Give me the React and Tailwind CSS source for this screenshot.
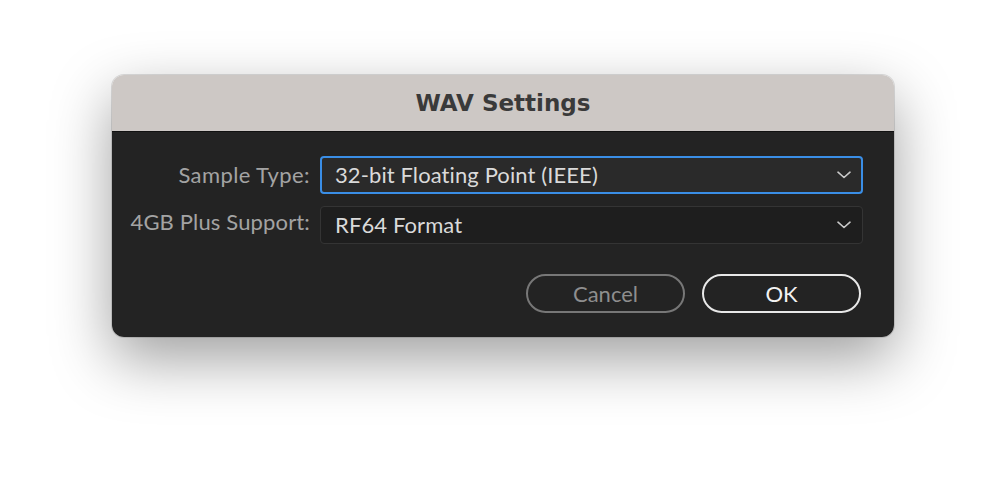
const Chevron = () => (
    <svg width="14" height="8" viewBox="0 0 14 8" fill="none" className="shrink-0">
        <path d="M1 1.2 L7 6.5 L13 1.2" stroke="#c9c9c9" strokeWidth="1.6" strokeLinecap="round" strokeLinejoin="round" />
    </svg>
);

function Select({ value, focused }) {
    return (
        <div
            className={
                focused
                    ? 'h-[38px] flex items-center justify-between pl-[13px] pr-[10px] rounded-[4px] border-2 border-[#3a8ee6] bg-[#2a2a2a]'
                    : 'h-[38px] flex items-center justify-between pl-[14px] pr-[11px] rounded-[4px] border border-[#343434] bg-[#1e1e1e]'
            }
        >
            <span className="text-[22px] tracking-[0.1px] text-[#dadada] leading-none whitespace-nowrap">{value}</span>
            <Chevron />
        </div>
    );
}

export default function App() {
    return (
        <div className="w-[1006px] h-[486px] bg-white pt-[75px] pl-[112px] font-['Lato',sans-serif]">
            <div className="w-[782px] rounded-[12px] overflow-hidden shadow-[0_22px_60px_rgba(0,0,0,0.38),0_0_0_1px_rgba(0,0,0,0.12)]">
                <div className="h-[57px] bg-[#cdc8c5] flex items-center justify-center border-b border-[#111]">
                    <span className="font-['DejaVu_Sans',sans-serif] font-bold text-[23px] text-[#3a3a3a]">WAV Settings</span>
                </div>
                <div className="bg-[#232323] pt-[24px] pb-[24px] pr-[31px]">
                    <div className="grid grid-cols-[198px_1fr] gap-x-[10px] gap-y-[12px] items-center">
                        <span className="text-right whitespace-nowrap text-[22px] tracking-[0.4px] text-[#a3a3a3] leading-none pt-[1px] pb-[1px]">Sample Type:</span>
                        <Select value="32-bit Floating Point (IEEE)" focused />
                        <span className="text-right whitespace-nowrap text-[22px] tracking-[0.15px] text-[#a3a3a3] leading-none pb-[6px]">4GB Plus Support:</span>
                        <Select value="RF64 Format" />
                    </div>
                    <div className="flex justify-end gap-[17px] mt-[30px] pr-[2px]">
                        <button className="w-[159px] h-[39px] rounded-full border-2 border-[#777] text-[22px] text-[#8e8e8e] leading-none">Cancel</button>
                        <button className="w-[159px] h-[39px] rounded-full border-2 border-[#e8e8e8] text-[22px] text-[#f2f2f2] leading-none">OK</button>
                    </div>
                </div>
            </div>
        </div>
    );
}
